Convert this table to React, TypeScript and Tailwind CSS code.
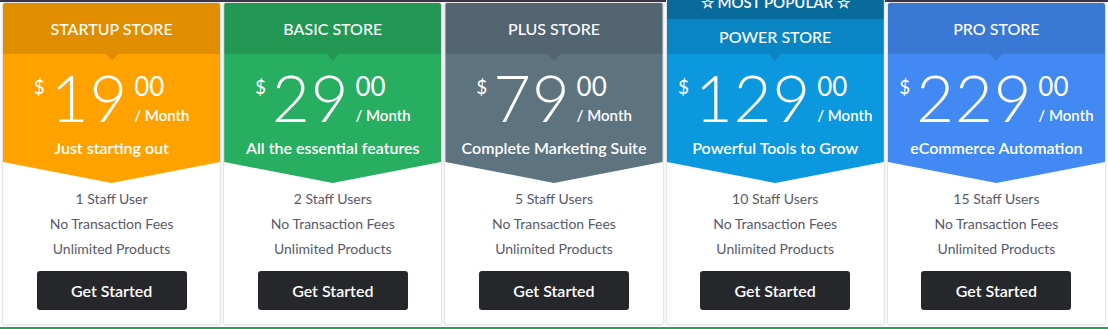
import React from "react";

type Plan = {
  name: string;
  price: string;
  tagline: string;
  users: string;
  color: string;
  popular?: boolean;
};

const plans: Plan[] = [
  { name: "Startup Store", price: "19", tagline: "Just starting out", users: "1 Staff User", color: "bg-[#ffa200]" },
  { name: "Basic Store", price: "29", tagline: "All the essential features", users: "2 Staff Users", color: "bg-[#27ae60]" },
  { name: "Plus Store", price: "79", tagline: "Complete Marketing Suite", users: "5 Staff Users", color: "bg-[#5e7380]" },
  { name: "Power Store", price: "129", tagline: "Powerful Tools to Grow", users: "10 Staff Users", color: "bg-[#0b98df]", popular: true },
  { name: "Pro Store", price: "229", tagline: "eCommerce Automation", users: "15 Staff Users", color: "bg-[#4289f4]" },
];

function PlanCard({ plan }: { plan: Plan }) {
  return (
    <div
      className={
        "flex flex-col overflow-hidden rounded-[3px] border border-[#e4e4e4] bg-white shadow-[0_1px_3px_rgba(0,0,0,0.08)] " +
        (plan.popular ? "relative z-10 -mt-[14px]" : "")
      }
    >
      {/* Colored top with chevron bottom */}
      <div
        className={
          plan.color +
          " text-white [clip-path:polygon(0_0,100%_0,100%_calc(100%-21px),50%_100%,0_calc(100%-21px))]"
        }
      >
        {plan.popular && (
          <div className="flex h-[30px] items-start justify-center bg-[rgba(0,0,0,0.3)] pt-[6px] text-[15px] font-semibold uppercase leading-[15px]">
            ☆ Most Popular ☆
          </div>
        )}
        <div
          className={
            "relative flex items-center justify-center bg-[rgba(0,0,0,0.12)] text-[16px] font-medium uppercase " +
            (plan.popular ? "h-[35px]" : "h-[51px]")
          }
        >
          {plan.name}
          <span className="absolute left-1/2 top-full -translate-x-1/2 border-x-[6px] border-t-[7px] border-x-transparent border-t-[rgba(0,0,0,0.12)]" />
        </div>

        <div className="flex flex-col items-center pt-[11px] pb-[25px]">
          <div className="flex items-start">
            <span className="mt-[12px] mr-[6px] text-[19px] leading-none">$</span>
            <span className="text-[65px] font-light leading-none tracking-[1px]">{plan.price}</span>
            <div className="ml-[6px] flex flex-col items-start">
              <span className="mt-[8px] text-[26px] font-normal leading-none">00</span>
              <span className="mt-[9px] text-[15px] font-semibold leading-none">/ Month</span>
            </div>
          </div>
          <p className="mt-[8px] text-[16px] font-semibold leading-[20px]">{plan.tagline}</p>
        </div>
      </div>

      {/* Features */}
      <div className="flex flex-col items-center pt-[3px] pb-[14px] text-[14px] leading-[25px] text-[#59596a]">
        <p>{plan.users}</p>
        <p>No Transaction Fees</p>
        <p>Unlimited Products</p>
        <button className="mt-[10px] h-[39px] w-[150px] rounded-[3px] bg-[#26272b] text-[16px] font-semibold text-white">
          Get Started
        </button>
      </div>
    </div>
  );
}

export default function App() {
  return (
    <div className="h-[329px] overflow-hidden bg-white font-['Lato','Open_Sans',sans-serif]">
      <div className="h-[2px] bg-[#3a3547]" />
      <div className="grid grid-cols-5 items-start gap-[2px] px-[2px]">
        {plans.map((plan) => (
          <PlanCard key={plan.name} plan={plan} />
        ))}
      </div>
      <div className="mt-[2px] h-[2px] bg-[#22a55a]" />
    </div>
  );
}
